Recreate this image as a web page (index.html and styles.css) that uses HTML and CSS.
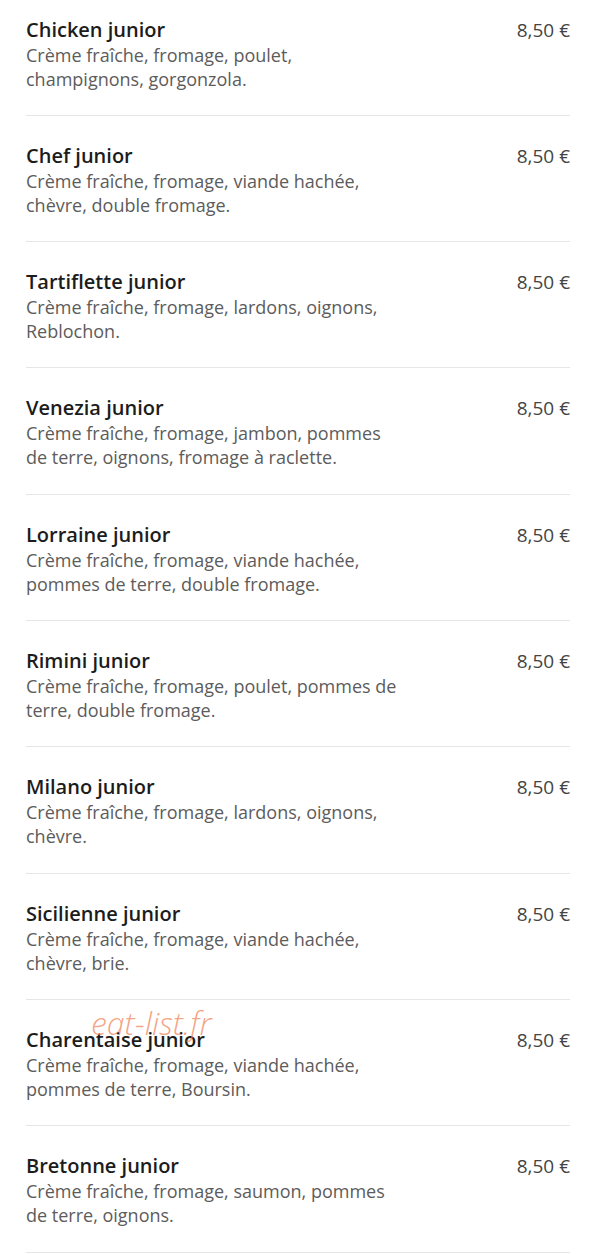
FILE: index.html
```html
<!DOCTYPE html>
<html lang="fr">
<head>
    <meta charset="UTF-8">
    <meta name="viewport" content="width=device-width, initial-scale=1.0">
    <title>Pizzas junior</title>
    <link rel="stylesheet" href="styles.css">
</head>
<body>
    <div class="menu">
        <div class="item">
            <div class="info">
                <h3>Chicken junior</h3>
                <p>Crème fraîche, fromage, poulet, champignons, gorgonzola.</p>
            </div>
            <span class="price">8,50 €</span>
        </div>
        <div class="item">
            <div class="info">
                <h3>Chef junior</h3>
                <p>Crème fraîche, fromage, viande hachée, chèvre, double fromage.</p>
            </div>
            <span class="price">8,50 €</span>
        </div>
        <div class="item">
            <div class="info">
                <h3>Tartiflette junior</h3>
                <p>Crème fraîche, fromage, lardons, oignons, Reblochon.</p>
            </div>
            <span class="price">8,50 €</span>
        </div>
        <div class="item">
            <div class="info">
                <h3>Venezia junior</h3>
                <p>Crème fraîche, fromage, jambon, pommes de terre, oignons, fromage à raclette.</p>
            </div>
            <span class="price">8,50 €</span>
        </div>
        <div class="item">
            <div class="info">
                <h3>Lorraine junior</h3>
                <p>Crème fraîche, fromage, viande hachée, pommes de terre, double fromage.</p>
            </div>
            <span class="price">8,50 €</span>
        </div>
        <div class="item">
            <div class="info">
                <h3>Rimini junior</h3>
                <p>Crème fraîche, fromage, poulet, pommes de terre, double fromage.</p>
            </div>
            <span class="price">8,50 €</span>
        </div>
        <div class="item">
            <div class="info">
                <h3>Milano junior</h3>
                <p>Crème fraîche, fromage, lardons, oignons, chèvre.</p>
            </div>
            <span class="price">8,50 €</span>
        </div>
        <div class="item">
            <div class="info">
                <h3>Sicilienne junior</h3>
                <p>Crème fraîche, fromage, viande hachée, chèvre, brie.</p>
            </div>
            <span class="price">8,50 €</span>
        </div>
        <div class="item">
            <div class="info">
                <h3>Charentaise junior</h3>
                <p>Crème fraîche, fromage, viande hachée, pommes de terre, Boursin.</p>
            </div>
            <span class="price">8,50 €</span>
            <span class="watermark">eat-list.fr</span>
        </div>
        <div class="item">
            <div class="info">
                <h3>Bretonne junior</h3>
                <p>Crème fraîche, fromage, saumon, pommes de terre, oignons.</p>
            </div>
            <span class="price">8,50 €</span>
        </div>
    </div>
</body>
</html>
```

FILE: styles.css
```css
body {
    margin: 0;
    padding: 0 28px 0 26px;
    background-color: #fff;
    font-family: "Open Sans", "DejaVu Sans", sans-serif;
}
.menu {
    display: flex;
    flex-direction: column;
}
.item {
    position: relative;
    display: flex;
    justify-content: space-between;
    align-items: flex-start;
    padding: 28px 0 24.33px;
    border-bottom: 1px solid #e6e6e6;
}
.item:first-child {
    padding-top: 17.5px;
}
.info {
    width: 380px;
}
.info h3 {
    margin: 0;
    font-size: 20px;
    line-height: 24px;
    font-weight: 600;
    color: #1c1c1c;
}
.info p {
    margin: 1px 0 0;
    font-size: 18px;
    line-height: 24px;
    color: #5c5c5c;
}
.price {
    font-size: 19px;
    line-height: 24px;
    color: #444;
}
.watermark {
    position: absolute;
    left: 65px;
    top: 5px;
    font-size: 32px;
    font-weight: 300;
    font-style: italic;
    line-height: 36px;
    color: rgba(240, 125, 80, 0.7);
    pointer-events: none;
}
```
